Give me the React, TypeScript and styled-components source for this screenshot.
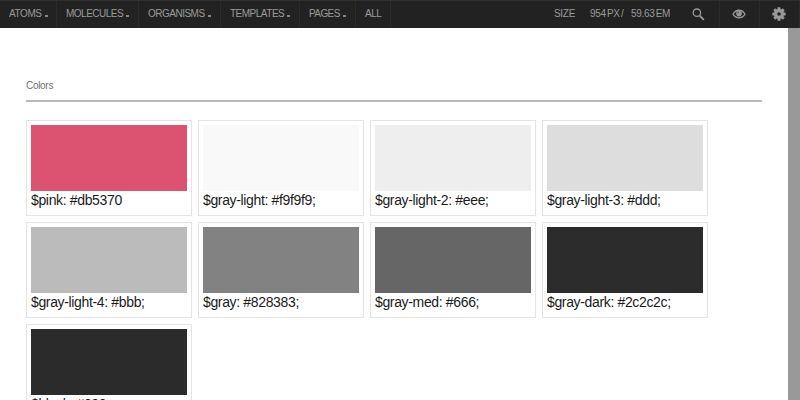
import React from 'react';
import styled, { createGlobalStyle } from 'styled-components';

const Global = createGlobalStyle`
  * { box-sizing: border-box; }
  html, body { margin: 0; height: 400px; overflow: hidden; }
  body { background: #999; font-family: "Liberation Sans", Arial, sans-serif; }
`;

const Bar = styled.header`
  display: flex;
  height: 28px;
  background: #222;
  border-top: 1px solid #303030;
  color: #9a9a9a;
  font-size: 10px;
  line-height: 25px;
  white-space: nowrap;
`;

const NavItem = styled.a<{ $width: number; $spacing: number }>`
  width: ${p => p.$width}px;
  padding-left: 9px;
  border-right: 1px solid #2b2b2b;
  letter-spacing: ${p => p.$spacing}px;
`;

const Caret = styled.i`
  display: inline-block;
  width: 3px;
  height: 2px;
  margin-left: 3px;
  background: #858585;
`;

const Tools = styled.div`
  display: flex;
  margin-left: auto;
`;

const Readout = styled.span<{ $width: number; $spacing?: number }>`
  width: ${p => p.$width}px;
  letter-spacing: ${p => p.$spacing ?? -0.3}px;
  word-spacing: -1.3px;
`;

const Tool = styled.button<{ $width: number }>`
  display: flex;
  align-items: center;
  justify-content: center;
  width: ${p => p.$width}px;
  padding: 0 2px 2px 0;
  border: 0;
  border-right: 1px solid #2b2b2b;
  background: none;
  color: #999;
`;

const Viewport = styled.main`
  width: 788px;
  height: 372px;
  padding: 50px 26px 0;
  overflow: hidden;
  background: #fff;
`;

const Heading = styled.h2`
  height: 24px;
  margin: 0 0 18px;
  border-bottom: 2px solid #b9b9b9;
  color: #6f6f6f;
  font-size: 10px;
  font-weight: 400;
  letter-spacing: -0.3px;
  line-height: 15px;
`;

const Grid = styled.ul`
  display: grid;
  grid-template-columns: repeat(4, 166px);
  grid-auto-rows: 96px;
  gap: 6px;
  margin: 0;
  padding: 0;
  list-style: none;
`;

const Card = styled.li`
  padding: 4px;
  border: 1px solid #e4e4e4;
`;

const Swatch = styled.div<{ $color: string }>`
  height: 66px;
  background: ${p => p.$color};
`;

const Label = styled.div`
  color: #1b1b1b;
  font-size: 14px;
  line-height: 19px;
  letter-spacing: -0.35px;
  white-space: nowrap;
`;

const nav = [
  { label: 'ATOMS', width: 57, spacing: -0.4 },
  { label: 'MOLECULES', width: 82, spacing: -0.5 },
  { label: 'ORGANISMS', width: 82, spacing: -0.5 },
  { label: 'TEMPLATES', width: 79, spacing: -0.5 },
  { label: 'PAGES', width: 56, spacing: -0.6 },
  { label: 'ALL', width: 35, spacing: -0.5 },
];

const colors = [
  { label: '$pink: #db5370', color: '#db5370' },
  { label: '$gray-light: #f9f9f9;', color: '#f9f9f9' },
  { label: '$gray-light-2: #eee;', color: '#eee' },
  { label: '$gray-light-3: #ddd;', color: '#ddd' },
  { label: '$gray-light-4: #bbb;', color: '#bbb' },
  { label: '$gray: #828383;', color: '#828282' },
  { label: '$gray-med: #666;', color: '#666' },
  { label: '$gray-dark: #2c2c2c;', color: '#2c2c2c' },
  { label: '$black: #000;', color: '#2b2b2b' },
];

const SearchIcon = () => (
  <svg width="14" height="14" viewBox="0 0 14 14" fill="none" stroke="currentColor">
    <circle cx="5.9" cy="5.7" r="3.7" strokeWidth="1.3" />
    <path d="M8.7 8.7 12.8 12.8" strokeWidth="1.9" />
  </svg>
);

const EyeIcon = () => (
  <svg width="14" height="12" viewBox="0 0 14 12" fill="none" stroke="currentColor">
    <path d="M1 6.2C3.9.9 10.1.9 13 6.2 10.1 11 3.9 11 1 6.2Z" strokeWidth="1.3" />
    <circle cx="7" cy="5.6" r="2.8" fill="currentColor" stroke="none" />
    <path d="M5.6 5.2Q5.9 4 7.1 4" stroke="#222" strokeWidth=".8" />
  </svg>
);

const GearIcon = () => (
  <svg width="14" height="14" viewBox="0 0 14 14">
    <g fill="currentColor">
      {[0, 45, 90, 135].map(a => (
        <rect key={a} x="5.5" y=".3" width="3" height="13.4" rx=".5" transform={`rotate(${a} 7 7)`} />
      ))}
      <circle cx="7" cy="7" r="4.9" />
    </g>
    <circle cx="7" cy="7" r="1.8" fill="#222" />
  </svg>
);

export default function App() {
  return (
    <>
      <Global />
      <Bar>
        {nav.map(n => (
          <NavItem key={n.label} $width={n.width} $spacing={n.spacing}>
            {n.label}
            {n.label !== 'ALL' && <Caret />}
          </NavItem>
        ))}
        <Tools>
          <Readout $width={36} $spacing={-0.3}>SIZE</Readout>
          <Readout $width={41}>954 PX /</Readout>
          <Readout $width={48}>59.63 EM</Readout>
          <Tool $width={41} aria-label="Search"><SearchIcon /></Tool>
          <Tool $width={40} aria-label="View"><EyeIcon /></Tool>
          <Tool $width={40} aria-label="Settings"><GearIcon /></Tool>
        </Tools>
      </Bar>
      <Viewport>
        <Heading>Colors</Heading>
        <Grid>
          {colors.map(c => (
            <Card key={c.label}>
              <Swatch $color={c.color} />
              <Label>{c.label}</Label>
            </Card>
          ))}
        </Grid>
      </Viewport>
    </>
  );
}
